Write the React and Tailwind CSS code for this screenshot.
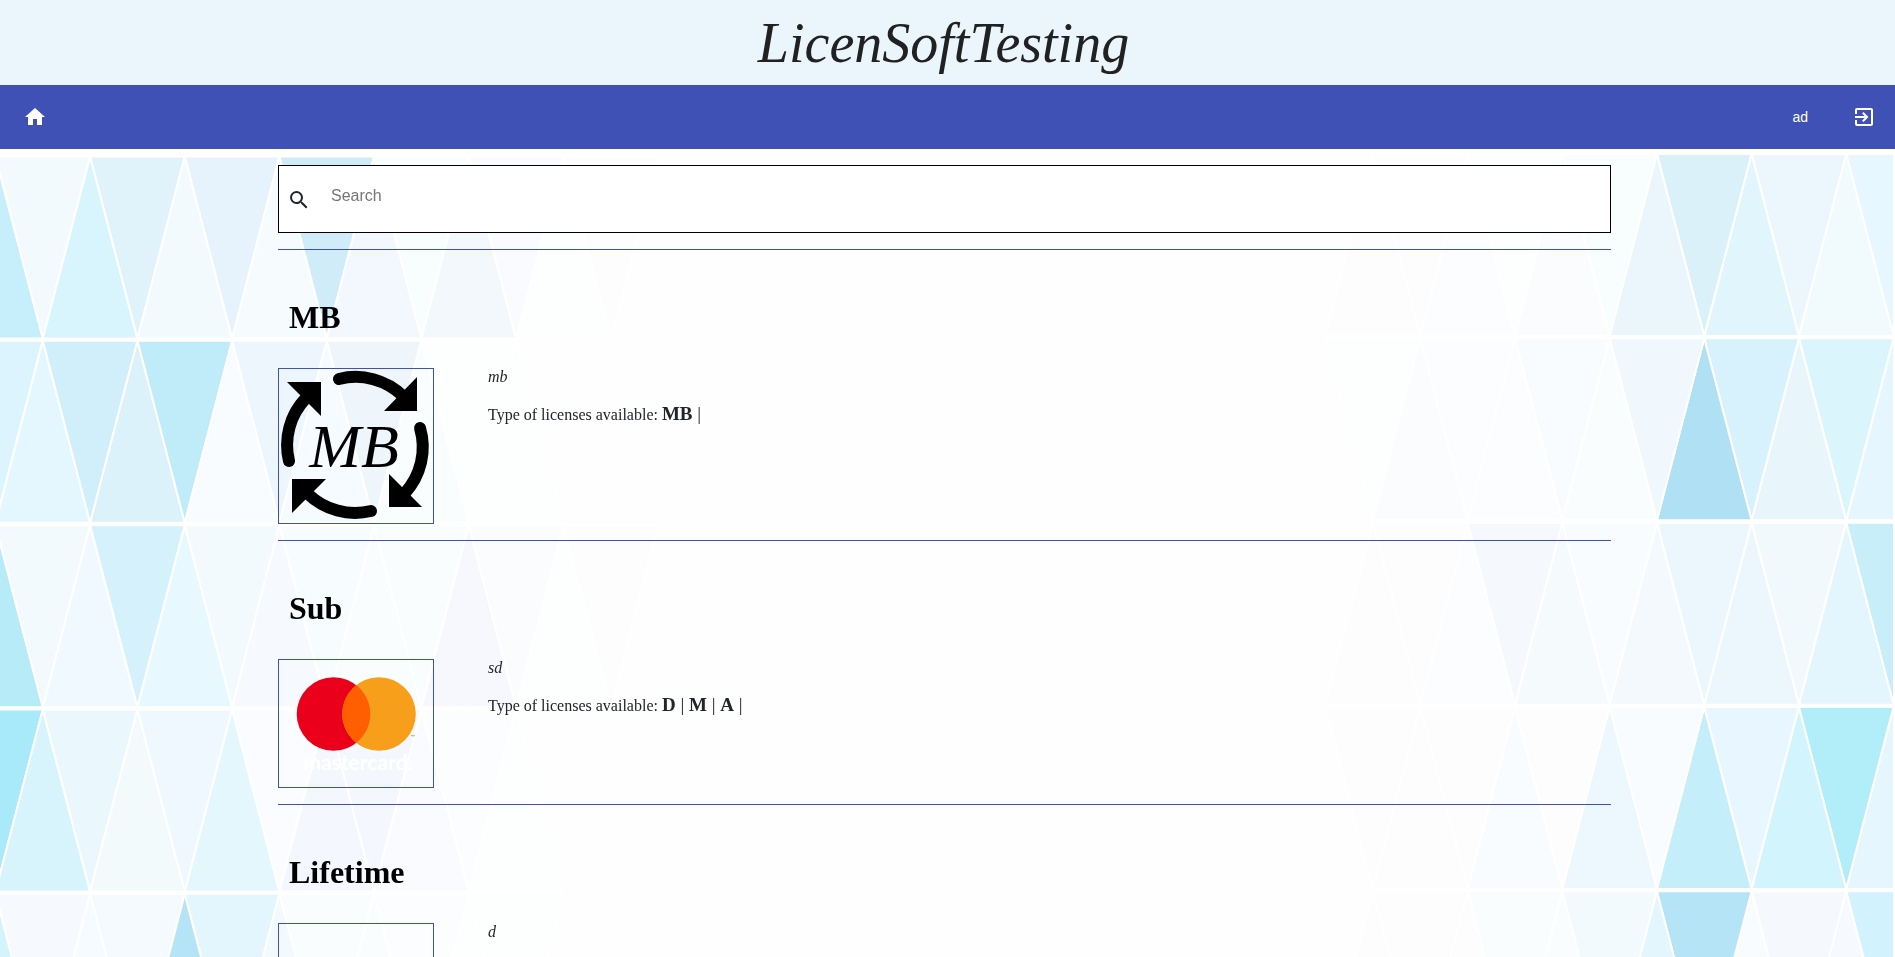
import React from "react";
import { MdHome, MdExitToApp, MdSearch } from "react-icons/md";

const ROW = 184;
const STEP = 95;

// Each row lists its triangle colours, walking inwards from the screen edge.
const LEFT_ROWS = [
  ["#c6effb", "#f2fafe", "#d8f5fd", "#e0f2fa", "#f2fafd", "#e6f2fc", "#f6fbfe", "#d0ecf8", "#f2f8fd", "#f8fdfe", "#f3f8fd", "#fafbfe", "#fdfefe", "#fdfdfe"],
  ["#dcf4fd", "#e4f6fe", "#d0effa", "#dbf2fb", "#c0ebf9", "#f8fcff", "#eef6fd", "#f6fbff", "#eef6fc", "#f9fdfe", "#fdfefe", "#fdfefe"],
  ["#b8ebf8", "#f2fafe", "#f0f9ff", "#d5f1fc", "#e8f8ff", "#f3fafd", "#f6f9fe", "#f7fcff", "#f9fdfe", "#fafdfe", "#f7f8fe", "#fbfcfe", "#fdfefe", "#fdfdfe"],
  ["#a8eafa", "#d7f3fc", "#eaf7fd", "#f2fafc", "#eff8ff", "#e3f7fc", "#fafcff", "#f4f7fd", "#f4f7fd", "#fafbfe", "#fcfdfe", "#fdfefe"],
  ["#d4f4fd", "#f6f9fe", "#f6fbff", "#f4fafd", "#b6e4f7", "#e3f6fe", "#f2fafe", "#f9fdfe", "#f9fdfe", "#fbfdfe", "#fdfefe", "#fdfefe"],
];

const RIGHT_ROWS = [
  ["#e6f7ff", "#f1fafd", "#ebf7fd", "#e0f5fc", "#dbf1f9", "#eaf5fc", "#f8fdfe", "#fbfcfe", "#fdfefe", "#fcfdfe", "#fdfdfd", "#fdfdfd"],
  ["#e6f6fe", "#daf5fc", "#e8f5fb", "#d7f2fd", "#b0e0f4", "#f0f8fe", "#f9fdfe", "#f8fcff", "#fcfdfe", "#fcfdfe", "#fbfcfe", "#fdfefe"],
  ["#c8eefa", "#e3f6fd", "#f2f9fc", "#ebf7fd", "#ecf7fd", "#f4f9fd", "#f8fcfe", "#f5fafd", "#f5f8fd", "#fcfdfe", "#fdfdfd", "#fdfdfd"],
  ["#e6f6ff", "#b2eef9", "#d2f4fd", "#e8f7ff", "#c5eefb", "#f8fcfe", "#ecf7fe", "#fdfdfe", "#f8fcfe", "#fdfdfe", "#fdfdfd", "#fdfdfd"],
  ["#d2f3fd", "#f6f9fe", "#f5f9fe", "#f9fcfe", "#b6e4f7", "#e3f6fe", "#f2fafd", "#f9fdfe", "#f9fdfd", "#fdfdfe", "#fdfdfd", "#fdfdfd"],
];

function Triangles({ rows, start, direction, top, firstUp }) {
  const half = (STEP - 0.35) / 2;
  return rows.map((colors, r) =>
    colors.map((color, i) => {
      const center = start + direction * half * i;
      const up = (r + i) % 2 === (firstUp ? 0 : 1);
      const y0 = top + r * ROW + (r * 1) / 3 + 1;
      const y1 = y0 + ROW - 2;
      const points = up
        ? `${center},${y0} ${center - half},${y1} ${center + half},${y1}`
        : `${center},${y1} ${center - half},${y0} ${center + half},${y0}`;
      return <polygon key={`${r}-${i}`} points={points} fill={color} stroke="#fff" strokeWidth="2" />;
    })
  );
}

function Backdrop() {
  return (
    <div aria-hidden="true" className="fixed inset-0 -z-10 flex justify-between overflow-hidden bg-[#fefefe]">
      <svg width="700" height="1080" className="shrink-0">
        <Triangles rows={LEFT_ROWS} start={-4.5} direction={1} top={155.5} firstUp />
      </svg>
      <svg width="700" height="1080" className="shrink-0">
        <Triangles rows={RIGHT_ROWS} start={698.5} direction={-1} top={153} firstUp={false} />
        <rect x="698" y="0" width="2" height="1080" fill="#fefefe" />
      </svg>
    </div>
  );
}

function CycleLogo() {
  return (
    <svg viewBox="0 0 154 154" className="block h-[154px] w-full" role="img" aria-label="MB">
      <g transform="translate(-1 -1)">
        <g fill="none" stroke="#000" strokeWidth="12" strokeLinecap="round">
          <path d="M61 11A68 68 0 0 1 125 28" />
          <path d="M142 60A68 68 0 0 1 127 125" />
          <path d="M93 143A68 68 0 0 1 30 126" />
          <path d="M11 93A68 68 0 0 1 28 30" />
        </g>
        <path d="M139 9V43H106ZM111 106L144 139H111ZM14 111H48L14 145ZM9 14H43V48Z" />
        <text
          x="76"
          y="99"
          textAnchor="middle"
          fontSize="62"
          fontStyle="italic"
          fontFamily="'Liberation Serif', serif"
        >
          MB
        </text>
      </g>
    </svg>
  );
}

function CardLogo() {
  return (
    <svg viewBox="0 0 154 127" className="block h-[127px] w-full" role="img" aria-label="mastercard">
      <circle cx="54.5" cy="54" r="36.8" fill="#eb001b" />
      <circle cx="100" cy="54" r="36.8" fill="#f79e1b" />
      <path d="M77.250 25.080A36.8 36.8 0 0 1 77.250 82.920A36.8 36.8 0 0 1 77.250 25.080Z" fill="#ff5f00" />
      <path d="M132 75.500H136M134 75.500V77" stroke="#f7b768" strokeWidth="1" />
      <text x="79" y="110" textAnchor="middle" fontSize="21" fontWeight="700" fill="#fff" fontFamily="Lato, sans-serif">
        mastercard.
      </text>
    </svg>
  );
}

const PRODUCTS = [
  { name: "MB", description: "mb", licenses: ["MB"], logo: <CycleLogo /> },
  { name: "Sub", description: "sd", licenses: ["D", "M", "A"], logo: <CardLogo /> },
  { name: "Lifetime", description: "d", licenses: [], logo: <div className="h-[154px]" /> },
];

function Product({ name, description, licenses, logo }) {
  return (
    <section className="border-t border-[#3f51b5] pb-4">
      <h2 className="flex h-[118px] items-center px-[11px] pt-4 text-[32px] leading-9 font-bold text-black">{name}</h2>
      <div className="flex items-start gap-[54px]">
        <a href="#product" aria-label={name} className="block w-[156px] shrink-0 border border-[#3f51b5]">
          {logo}
        </a>
        <div className="flex flex-col gap-4 text-base text-[#212529]">
          <p className="leading-[18px] italic">{description}</p>
          {licenses.length > 0 && (
            <p className="leading-6">
              Type of licenses available:{" "}
              <span className="text-[19px]">
                {licenses.map((license) => (
                  <React.Fragment key={license}>
                    <strong>{license}</strong> |{" "}
                  </React.Fragment>
                ))}
              </span>
            </p>
          )}
        </div>
      </div>
    </section>
  );
}

export default function App() {
  return (
    <div className="h-screen overflow-hidden font-['Liberation_Serif',serif]">
      <Backdrop />
      <header>
        <div className="flex h-[85px] items-center justify-center bg-[#eaf5fc]">
          <h1 className="pr-2 text-[56px] leading-none text-[#212121] italic">LicenSoftTesting</h1>
        </div>
        <nav className="flex h-16 items-center justify-between bg-[#3f51b5] pr-[19px] pl-[23px] text-white">
          <a href="#home" aria-label="Home">
            <MdHome size={24} />
          </a>
          <div className="flex items-center gap-11">
            <button type="button" className="font-['Liberation_Sans',sans-serif] text-sm font-medium">
              ad
            </button>
            <button type="button" aria-label="Log out">
              <MdExitToApp size={24} />
            </button>
          </div>
        </nav>
      </header>
      <main className="pt-4 pr-[284px] pl-[278px]">
        <div className="mb-4 flex h-[68px] items-center gap-5 border border-black bg-white px-2 pt-0.5 text-[#212529]">
          <MdSearch size={24} className="shrink-0" />
          <input
            type="search"
            aria-label="Search"
            placeholder="Search"
            className="mb-2 min-w-0 flex-1 bg-transparent font-['Liberation_Sans',sans-serif] text-base outline-none placeholder:text-[#757575]"
          />
        </div>
        {PRODUCTS.map((product) => (
          <Product key={product.name} {...product} />
        ))}
      </main>
    </div>
  );
}
